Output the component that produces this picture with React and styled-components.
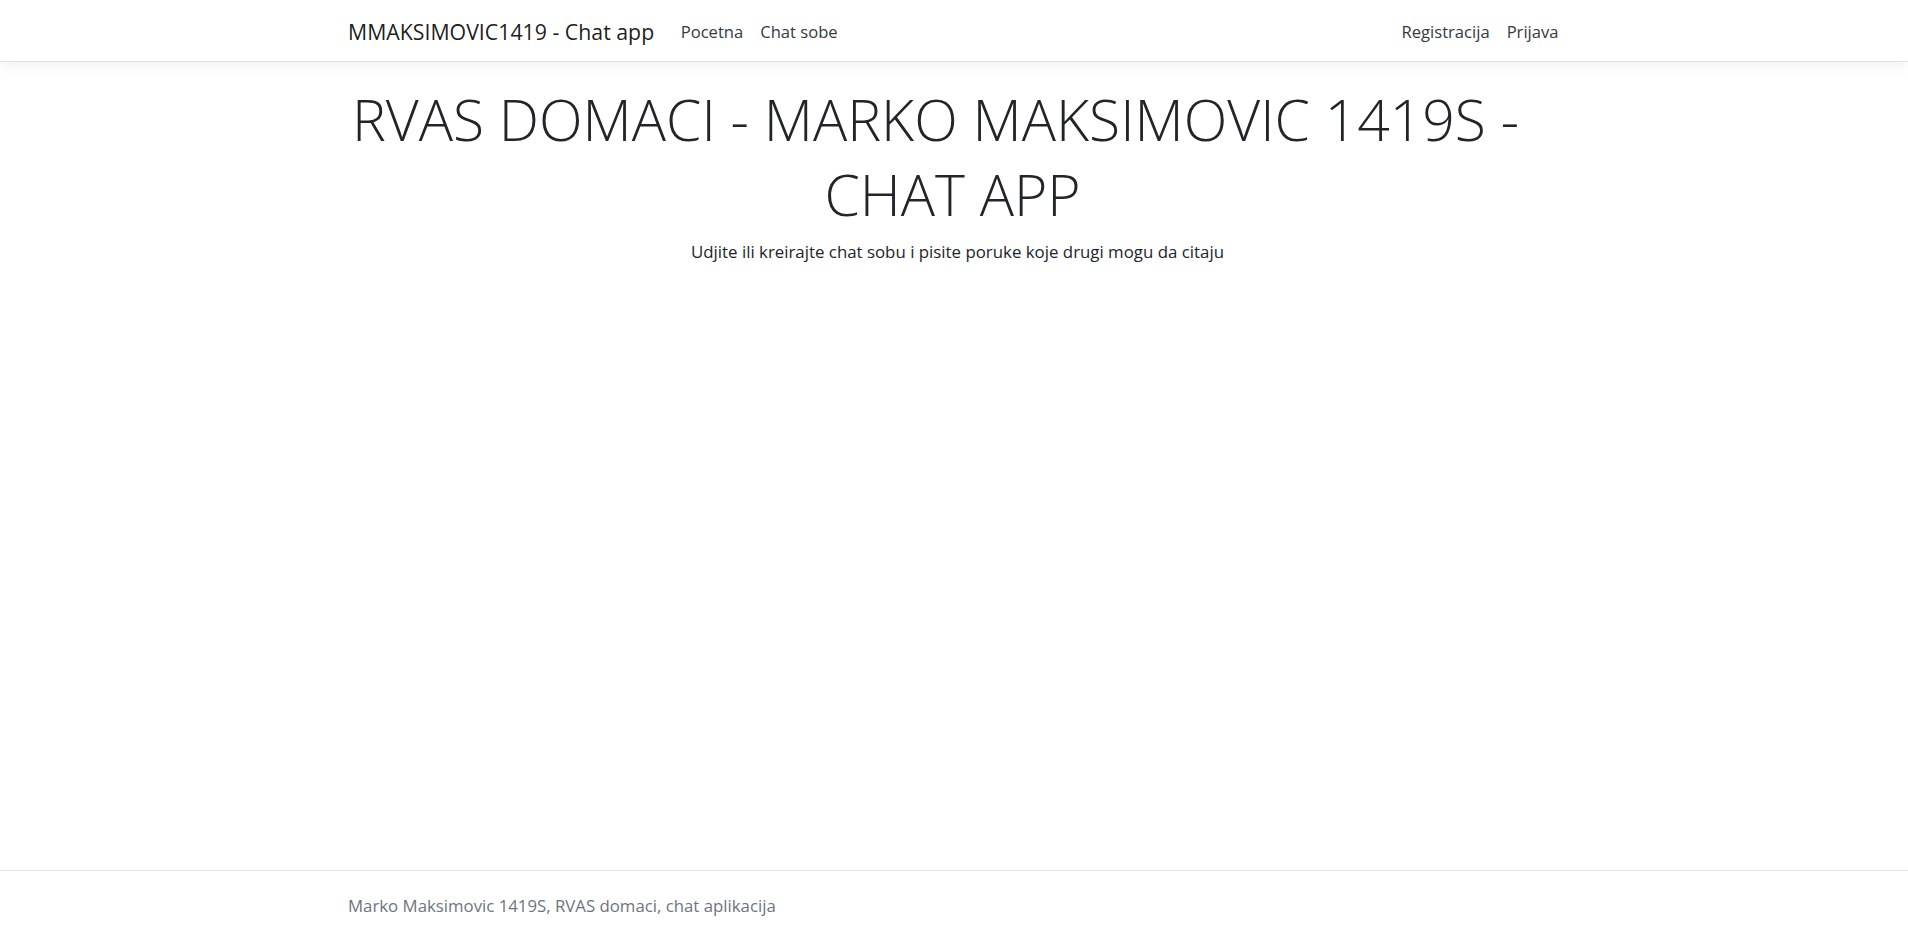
import React from 'react';
import styled, { createGlobalStyle } from 'styled-components';

const GlobalStyle = createGlobalStyle`
  html, body {
    margin: 0;
    padding: 0;
    height: 100%;
  }
  body {
    font-family: "Segoe UI", "Open Sans", "Noto Sans", sans-serif;
    font-size: 18px;
    line-height: 1.5;
    color: #212529;
    background: #fff;
  }
  #root {
    height: 100%;
  }
`;

const Page = styled.div`
  display: flex;
  flex-direction: column;
  min-height: 100vh;
`;

const Container = styled.div`
  width: 1219px;
  padding-left: 7px;
  margin: 0 auto;
`;

const Navbar = styled.nav`
  background: #fff;
  border-bottom: 1px solid #dee2e6;
  box-shadow: 0 4.5px 13.5px rgba(0, 0, 0, 0.05);
  height: 58px;
  padding-top: 3px;
  display: flex;
  align-items: center;
`;

const NavInner = styled(Container)`
  display: flex;
  align-items: center;
`;

const Brand = styled.a`
  font-size: 21.3px;
  color: rgba(0, 0, 0, 0.9);
  text-decoration: none;
  margin-right: 18px;
  white-space: nowrap;
`;

const NavList = styled.ul`
  display: flex;
  list-style: none;
  margin: 0;
  padding: 0;
  flex: ${(p) => (p.grow ? 1 : 'none')};
`;

const NavLink = styled.a`
  display: block;
  padding: 8px 8.5px;
  font-size: 16.6px;
  color: #343a40;
  text-decoration: none;
`;

const Main = styled.main`
  flex: 1;
  padding-top: 18px;
`;

const Hero = styled.div`
  text-align: center;
`;

const Title = styled.h1`
  margin: 0 0 5px;
  font-size: 57px;
  font-weight: 300;
  line-height: 75.6px;
  padding-top: 1.5px;
`;

const Trail = styled.span`
  display: inline-block;
  width: ${(p) => p.w}px;
`;

const Lead = styled.p`
  margin: 0;
  font-size: 16.85px;
  line-height: 27px;
`;

const Footer = styled.footer`
  border-top: 1px solid #dee2e6;
  height: 57px;
  padding-top: 4px;
  line-height: 61px;
  color: #6c757d;
  font-size: 16.8px;
`;

export default function App() {
  return (
    <Page>
      <GlobalStyle />
      <Navbar>
        <NavInner>
          <Brand href="#">MMAKSIMOVIC1419 - Chat app</Brand>
          <NavList grow>
            <li><NavLink href="#">Pocetna</NavLink></li>
            <li><NavLink href="#">Chat sobe</NavLink></li>
          </NavList>
          <NavList>
            <li><NavLink href="#">Registracija</NavLink></li>
            <li><NavLink href="#">Prijava</NavLink></li>
          </NavList>
        </NavInner>
      </Navbar>
      <Main>
        <Container>
          <Hero>
            <Title>
              RVAS DOMACI - MARKO MAKSIMOVIC 1419S -<Trail w={44} /> CHAT APP<Trail w={10} />
            </Title>
            <Lead>Udjite ili kreirajte chat sobu i pisite poruke koje drugi mogu da citaju</Lead>
          </Hero>
        </Container>
      </Main>
      <Footer>
        <Container>Marko Maksimovic 1419S, RVAS domaci, chat aplikacija</Container>
      </Footer>
    </Page>
  );
}
